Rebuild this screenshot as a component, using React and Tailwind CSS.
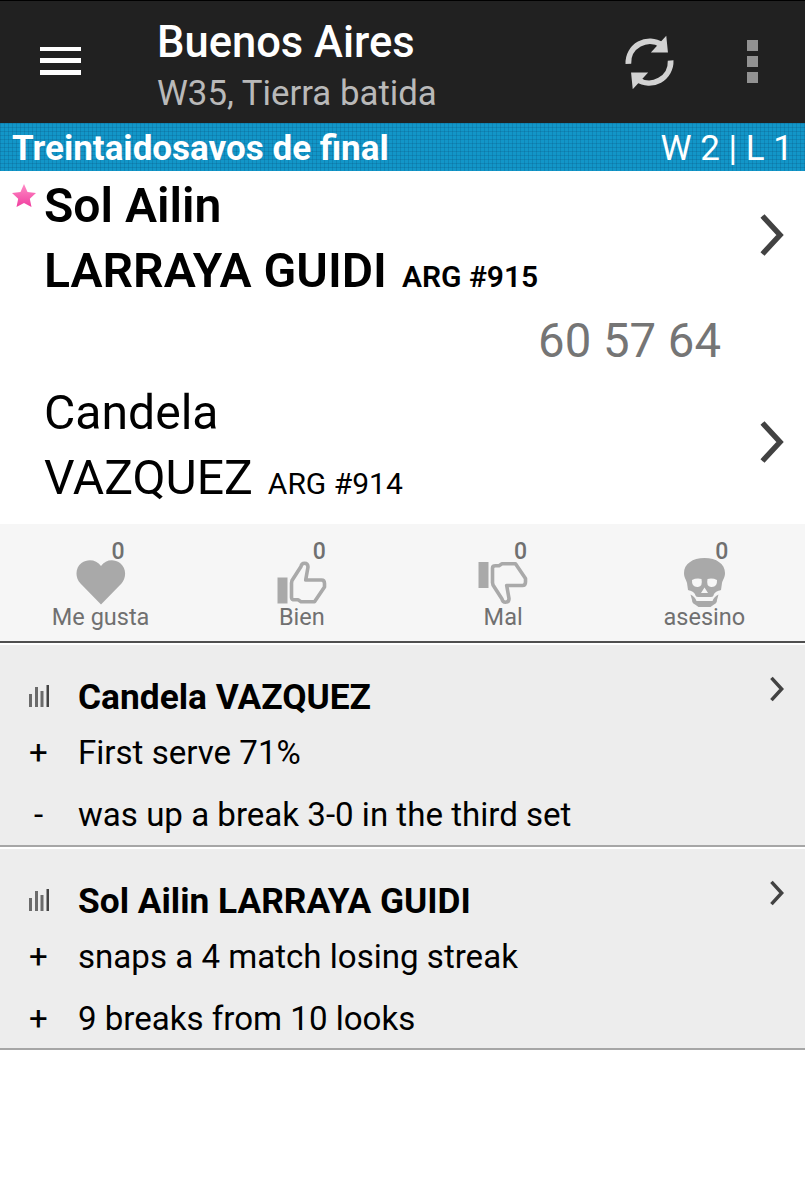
const NOTES = [
  {
    player: 'Candela VAZQUEZ',
    lines: [
      { sign: '+', text: 'First serve 71%' },
      { sign: '-', text: 'was up a break 3-0 in the third set' },
    ],
  },
  {
    player: 'Sol Ailin LARRAYA GUIDI',
    lines: [
      { sign: '+', text: 'snaps a 4 match losing streak' },
      { sign: '+', text: '9 breaks from 10 looks' },
    ],
  },
];

const HeartIcon = () => (
  <svg viewBox="0 0 50 50" className="h-[50px] w-[50px]" fill="#a9a9a9">
    <path d="M25 46.5 L4.5 25.5 C-1.5 19 -.5 9.5 5.500 5 C12 .5 20.500 1.800 25 8 C29.500 1.800 37.500 .5 44 5 C50 9.500 51 19 45.500 25.500 Z" />
  </svg>
);

const THUMB =
  'M15 22.500 L24 8.500 Q24.500 5.200 27.500 5.200 Q31 5.200 31 9 L28.700 22 H44.500 Q47.500 22 47.500 25.500 V29 L37.500 43.700 H24 L21 41.800 H17.500 Q14.500 41.800 14.500 39.500 V25 Z';

const ThumbUpIcon = () => (
  <svg viewBox="0 0 50 50" className="h-[50px] w-[50px]" fill="none">
    <rect x="0.5" y="19.500" width="10" height="26" fill="#a9a9a9" />
    <path d={THUMB} stroke="#a9a9a9" strokeWidth="3.600" strokeLinejoin="round" />
  </svg>
);

const ThumbDownIcon = () => (
  <svg viewBox="0 0 50 50" className="h-[50px] w-[50px]" fill="none">
    <g transform="translate(0 49.500) scale(1 -1)">
      <rect x="0.5" y="19.500" width="10" height="26" fill="#a9a9a9" />
      <path d={THUMB} stroke="#a9a9a9" strokeWidth="3.600" strokeLinejoin="round" />
    </g>
  </svg>
);

const SkullIcon = () => (
  <svg viewBox="0 0 50 50" className="h-[50px] w-[50px]">
    <path
      d="M25.500 0 C37.500 0 46 6 46 15 C46 20 43.500 22 43 25 L42 32 C38.500 33 35.500 34 34.500 37.500 Q34 39 31.500 39 H19.500 Q17 39 16.500 37.500 C15.500 34 12.500 33 9 32 L8 25 C7.500 22 5 20 5 15 C5 6 13.500 0 25.500 0 Z"
      fill="#a9a9a9"
    />
    <path
      d="M13 22 Q17.500 19.800 22.500 21 Q24 28.500 19 29 Q12.500 29.500 13 22 Z M38 22 Q33.500 19.800 28.500 21 Q27 28.500 32 29 Q38.500 29.500 38 22 Z M25.500 29.500 L29 35 H22 Z"
      fill="#f6f6f6"
    />
    <path
      d="M11.500 36.500 Q16 38.500 17.500 43 H33.500 Q35 38.500 39.500 36.500 L38 42 Q38 45 35 46.500 L31.500 49 H19.500 L16 46.500 Q13 45 13 42 Z"
      fill="#a9a9a9"
    />
  </svg>
);

const REACTIONS = [
  { label: 'Me gusta', count: 0, Icon: HeartIcon },
  { label: 'Bien', count: 0, Icon: ThumbUpIcon },
  { label: 'Mal', count: 0, Icon: ThumbDownIcon },
  { label: 'asesino', count: 0, Icon: SkullIcon },
];

const RefreshIcon = () => (
  <svg viewBox="104 106 146 164" className="h-[55px] w-[49px]">
    <g fill="none" stroke="#d2d2d2" strokeWidth="17">
      <path d="M114 192 A64 64 0 0 1 214 136" />
      <path d="M240 182 A64 64 0 0 1 140 238" />
    </g>
    <path d="M227 108 L232 158 L181 158 Z M127 268 L122 218 L173 218 Z" fill="#d2d2d2" />
  </svg>
);

const Chevron = ({ className, strokeWidth = 5.5 }) => (
  <svg viewBox="0 0 24 44" className={className} fill="none">
    <path d="M2.500 3 L20 22 L2.500 41" stroke="#424242" strokeWidth={strokeWidth} />
  </svg>
);

const BarsIcon = () => (
  <svg viewBox="0 0 21 23" className="h-[23px] w-[21px]" fill="#6b6b6b">
    <rect x="0" y="9" width="3" height="13" />
    <rect x="6" y="2" width="3" height="20" />
    <rect x="11.500" y="6" width="3" height="16" />
    <rect x="17.500" y="0" width="2.500" height="22" fill="#444444" />
  </svg>
);

const Header = () => (
  <header className="flex h-[123px] border-t border-black bg-[#212121] pl-10">
    <button className="flex w-[117px] flex-col gap-[7px] pt-[46px]">
      <span className="h-[4px] w-[41px] bg-white" />
      <span className="h-[5px] w-[41px] bg-white" />
      <span className="h-[5px] w-[41px] bg-white" />
    </button>
    <div className="flex-1 pt-4">
      <h1 className="text-[43.5px] leading-[51px] font-medium text-white">Buenos Aires</h1>
      <p className="text-[34.8px] leading-[51px] text-[#b9b9b9]">W35, Tierra batida</p>
    </div>
    <button className="flex pt-[34px] pr-[73px]">
      <RefreshIcon />
    </button>
    <button className="flex flex-col gap-[5px] pt-[39px] pr-[47px]">
      <span className="size-[11px] bg-[#929292]" />
      <span className="size-[11px] bg-[#929292]" />
      <span className="size-[11px] bg-[#929292]" />
    </button>
  </header>
);

const RoundBar = () => (
  <div className="flex h-12 justify-between bg-[#1296c8] bg-[linear-gradient(to_right,#0a5f8a4d_1px,transparent_1px),linear-gradient(to_bottom,#0a5f8a4d_1px,transparent_1px)] bg-[size:4px_4px] px-3 leading-[52px] text-white">
    <span className="text-[35px] font-bold">Treintaidosavos de final</span>
    <span className="text-[35px]">W 2 | L 1</span>
  </div>
);

const Player = ({ first, last, rank, winner }) => (
  <div className="flex items-start justify-between pr-[21px]">
    <div className={winner ? 'flex font-semibold' : 'flex'}>
      <div className="w-11 pt-[11px] pl-3">
        {winner && (
          <svg viewBox="0 0 24 24" className="size-6">
            <defs>
              <linearGradient id="star" x1="0" y1="0" x2="0" y2="1">
                <stop offset="0" stopColor="#ff8cc6" />
                <stop offset="1" stopColor="#f03fa0" />
              </linearGradient>
            </defs>
            <path d="M12 0 L15.500 8 L24 9 L17.800 14.700 L19.500 23 L12 19 L4.500 23 L6.200 14.700 L0 9 L8.500 8 Z" fill="url(#star)" />
          </svg>
        )}
      </div>
      <div className="text-[48.1px] leading-[65px] text-black">
        <div>{first}</div>
        <div>
          {last} <span className="ml-[3px] text-[30px] leading-none">{rank}</span>
        </div>
      </div>
    </div>
    <div className="pt-10">
      <Chevron className="h-11 w-6" />
    </div>
  </div>
);

const NoteCard = ({ note }) => (
  <section className="border-b-2 border-[#a6a6a6]">
    <div className="border-t-2 border-white bg-[#ededed] pt-7">
      <div className="flex pr-[21px] pl-[29px]">
        <div className="w-[49px] pt-3">
          <BarsIcon />
        </div>
        <h2 className="flex-1 pb-px text-[35.3px] leading-[48px] font-bold">{note.player}</h2>
        <div className="pt-[3px]">
          <Chevron className="h-[26px] w-[14px]" strokeWidth={6} />
        </div>
      </div>
      <div className="h-[122.5px]">
        {note.lines.map((line) => (
          <div key={line.text} className="flex text-[33.1px] leading-[62px]">
            <span className="w-[78px] pr-px text-center">{line.sign}</span>
            <span>{line.text}</span>
          </div>
        ))}
      </div>
    </div>
  </section>
);

export default function App() {
  return (
    <div className="min-h-[1200px] w-[805px] bg-white font-['Roboto',sans-serif] text-black">
      <Header />
      <RoundBar />

      <main>
        <div className="h-[353px] pt-[2px]">
          <Player first="Sol Ailin" last="LARRAYA GUIDI" rank="ARG #915" winner />
          <div className="pr-[84px] text-right text-[47.3px] leading-[77px] text-[#757575]">60 57 64</div>
          <Player first="Candela" last="VAZQUEZ" rank="ARG #914" />
        </div>

        {/* Reactions */}
        <div className="grid h-[119px] grid-cols-4 border-b-2 border-[#4f4f4f] bg-[#f6f6f6] pt-[34px]">
          {REACTIONS.map(({ label, count, Icon }) => (
            <button key={label} className="flex flex-col items-center text-[#707070]">
              <span className="relative">
                <Icon />
                <span className="absolute -top-4 right-px text-[23px] leading-5 font-medium">{count}</span>
              </span>
              <span className="text-[23.5px] leading-[18px]">{label}</span>
            </button>
          ))}
        </div>

        {NOTES.map((note) => (
          <NoteCard key={note.player} note={note} />
        ))}
      </main>
    </div>
  );
}
